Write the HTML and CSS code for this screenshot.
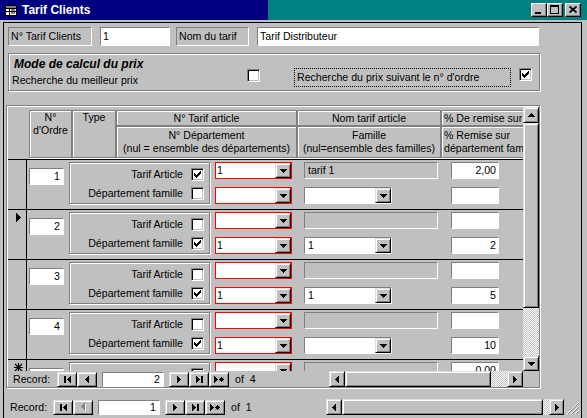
FILE: index.html
```html
<!DOCTYPE html>
<html>
<head>
<meta charset="utf-8">
<title>Tarif Clients</title>
<link rel="stylesheet" href="styles.css">
</head>
<body>
<div class="win">
  <div class="titlebar">
    <svg class="ticon" width="12" height="11" viewBox="0 0 12 11">
      <rect x="0.5" y="0.5" width="11" height="10" fill="#fff" stroke="#000"/>
      <rect x="1" y="1" width="10" height="2" fill="#808080"/>
      <path d="M1 3.5h10M1 6.5h10M4.5 3v7" stroke="#000" fill="none"/>
      <rect x="6" y="4" width="4" height="2" fill="#808080"/>
      <rect x="6" y="7" width="4" height="2" fill="#808080"/>
    </svg>
    <span class="ttext">Tarif Clients</span>
    <div class="tbtns">
      <span class="cap"><svg width="14" height="12" viewBox="0 0 14 12"><rect x="3" y="8" width="6" height="2"/></svg></span>
      <span class="cap"><svg width="14" height="12" viewBox="0 0 14 12"><path d="M2 1h9v9h-9z M3 3v6h7v-6z" fill-rule="evenodd"/></svg></span>
      <span class="cap close"><svg width="14" height="12" viewBox="0 0 14 12"><path d="M3.5 2.5l7 6M10.5 2.5l-7 6" stroke="#000" stroke-width="1.7" fill="none"/></svg></span>
    </div>
  </div>

  <div class="client">
    <div class="row1">
      <div class="lbl l1">N° Tarif Clients</div>
      <div class="tb t1">1</div>
      <div class="lbl l2">Nom du tarif</div>
      <div class="tb t2">Tarif Distributeur</div>
    </div>

    <div class="mode">
      <div class="mode-left">
        <div class="mode-title">Mode de calcul du prix</div>
        <div class="mode-sub">Recherche du meilleur prix</div>
      </div>
      <span class="cb m1"></span>
      <div class="dotlbl">Recherche du prix suivant le n° d'ordre</div>
      <span class="cb m2"><svg width="7" height="7" viewBox="0 0 7 7"><path d="M6 0h1v1h-1z M5 1h2v1h-2z M0 2h1v1h-1z M4 2h3v1h-3z M0 3h2v1h-2z M3 3h3v1h-3z M0 4h5v1h-5z M1 5h3v1h-3z M2 6h1v1h-1z"/></svg></span>
    </div>

    <div class="sub">
      <div class="sub-main">
        <div class="sub-body">
          <div class="hdr">
            <div class="hdr-sel"></div>
            <div class="hc c-ordre">N°<br>d'Ordre</div>
            <div class="hc c-type">Type</div>
            <div class="hgrp g-tarif">
              <div class="hc top">N° Tarif article</div>
              <div class="hc bot">N° Département<br>(nul = ensemble des départements)</div>
            </div>
            <div class="hgrp g-nom">
              <div class="hc top">Nom tarif article</div>
              <div class="hc bot">Famille<br>(nul=ensemble des familles)</div>
            </div>
            <div class="hgrp g-rem">
              <div class="hc top left">% De remise sur les articles</div>
              <div class="hc bot left">% Remise sur<br>département famille</div>
            </div>
          </div>

          <div class="rows">
            <div class="drow">
              <div class="sel"></div>
              <div class="ord">1</div>
              <div class="tframe">
                <div class="tl"><span class="tlab">Tarif Article</span><span class="cb"><svg width="7" height="7" viewBox="0 0 7 7"><path d="M6 0h1v1h-1z M5 1h2v1h-2z M0 2h1v1h-1z M4 2h3v1h-3z M0 3h2v1h-2z M3 3h3v1h-3z M0 4h5v1h-5z M1 5h3v1h-3z M2 6h1v1h-1z"/></svg></span></div>
                <div class="tl"><span class="tlab">Département famille</span><span class="cb"></span></div>
              </div>
              <div class="combos">
                <div class="rc"><span class="v">1</span><span class="dd"><svg width="7" height="4" viewBox="0 0 7 4"><path d="M0 0h7v1h-1v1h-1v1h-1v1h-1v-1h-1v-1h-1v-1h-1z"/></svg></span></div>
                <div class="rc"><span class="v"></span><span class="dd"><svg width="7" height="4" viewBox="0 0 7 4"><path d="M0 0h7v1h-1v1h-1v1h-1v1h-1v-1h-1v-1h-1v-1h-1z"/></svg></span></div>
              </div>
              <div class="fam">
                <div class="tbox">tarif 1</div>
                <div class="fc"><span class="v"></span><span class="dd"><svg width="7" height="4" viewBox="0 0 7 4"><path d="M0 0h7v1h-1v1h-1v1h-1v1h-1v-1h-1v-1h-1v-1h-1z"/></svg></span></div>
              </div>
              <div class="pct">
                <div class="pbox">2,00</div>
                <div class="pbox"></div>
              </div>
            </div>
            <div class="drow">
              <div class="sel"><svg width="5" height="9" viewBox="0 0 5 9"><path d="M0 0h1v1h1v1h1v1h1v1h1v1h-1v1h-1v1h-1v1h-1v1h-1z"/></svg></div>
              <div class="ord">2</div>
              <div class="tframe">
                <div class="tl"><span class="tlab">Tarif Article</span><span class="cb"></span></div>
                <div class="tl"><span class="tlab">Département famille</span><span class="cb"><svg width="7" height="7" viewBox="0 0 7 7"><path d="M6 0h1v1h-1z M5 1h2v1h-2z M0 2h1v1h-1z M4 2h3v1h-3z M0 3h2v1h-2z M3 3h3v1h-3z M0 4h5v1h-5z M1 5h3v1h-3z M2 6h1v1h-1z"/></svg></span></div>
              </div>
              <div class="combos">
                <div class="rc"><span class="v"></span><span class="dd"><svg width="7" height="4" viewBox="0 0 7 4"><path d="M0 0h7v1h-1v1h-1v1h-1v1h-1v-1h-1v-1h-1v-1h-1z"/></svg></span></div>
                <div class="rc"><span class="v">1</span><span class="dd"><svg width="7" height="4" viewBox="0 0 7 4"><path d="M0 0h7v1h-1v1h-1v1h-1v1h-1v-1h-1v-1h-1v-1h-1z"/></svg></span></div>
              </div>
              <div class="fam">
                <div class="tbox"></div>
                <div class="fc"><span class="v">1</span><span class="dd"><svg width="7" height="4" viewBox="0 0 7 4"><path d="M0 0h7v1h-1v1h-1v1h-1v1h-1v-1h-1v-1h-1v-1h-1z"/></svg></span></div>
              </div>
              <div class="pct">
                <div class="pbox"></div>
                <div class="pbox">2</div>
              </div>
            </div>
            <div class="drow">
              <div class="sel"></div>
              <div class="ord">3</div>
              <div class="tframe">
                <div class="tl"><span class="tlab">Tarif Article</span><span class="cb"></span></div>
                <div class="tl"><span class="tlab">Département famille</span><span class="cb"><svg width="7" height="7" viewBox="0 0 7 7"><path d="M6 0h1v1h-1z M5 1h2v1h-2z M0 2h1v1h-1z M4 2h3v1h-3z M0 3h2v1h-2z M3 3h3v1h-3z M0 4h5v1h-5z M1 5h3v1h-3z M2 6h1v1h-1z"/></svg></span></div>
              </div>
              <div class="combos">
                <div class="rc"><span class="v"></span><span class="dd"><svg width="7" height="4" viewBox="0 0 7 4"><path d="M0 0h7v1h-1v1h-1v1h-1v1h-1v-1h-1v-1h-1v-1h-1z"/></svg></span></div>
                <div class="rc"><span class="v">1</span><span class="dd"><svg width="7" height="4" viewBox="0 0 7 4"><path d="M0 0h7v1h-1v1h-1v1h-1v1h-1v-1h-1v-1h-1v-1h-1z"/></svg></span></div>
              </div>
              <div class="fam">
                <div class="tbox"></div>
                <div class="fc"><span class="v">1</span><span class="dd"><svg width="7" height="4" viewBox="0 0 7 4"><path d="M0 0h7v1h-1v1h-1v1h-1v1h-1v-1h-1v-1h-1v-1h-1z"/></svg></span></div>
              </div>
              <div class="pct">
                <div class="pbox"></div>
                <div class="pbox">5</div>
              </div>
            </div>
            <div class="drow">
              <div class="sel"></div>
              <div class="ord">4</div>
              <div class="tframe">
                <div class="tl"><span class="tlab">Tarif Article</span><span class="cb"></span></div>
                <div class="tl"><span class="tlab">Département famille</span><span class="cb"><svg width="7" height="7" viewBox="0 0 7 7"><path d="M6 0h1v1h-1z M5 1h2v1h-2z M0 2h1v1h-1z M4 2h3v1h-3z M0 3h2v1h-2z M3 3h3v1h-3z M0 4h5v1h-5z M1 5h3v1h-3z M2 6h1v1h-1z"/></svg></span></div>
              </div>
              <div class="combos">
                <div class="rc"><span class="v"></span><span class="dd"><svg width="7" height="4" viewBox="0 0 7 4"><path d="M0 0h7v1h-1v1h-1v1h-1v1h-1v-1h-1v-1h-1v-1h-1z"/></svg></span></div>
                <div class="rc"><span class="v">1</span><span class="dd"><svg width="7" height="4" viewBox="0 0 7 4"><path d="M0 0h7v1h-1v1h-1v1h-1v1h-1v-1h-1v-1h-1v-1h-1z"/></svg></span></div>
              </div>
              <div class="fam">
                <div class="tbox"></div>
                <div class="fc"><span class="v"></span><span class="dd"><svg width="7" height="4" viewBox="0 0 7 4"><path d="M0 0h7v1h-1v1h-1v1h-1v1h-1v-1h-1v-1h-1v-1h-1z"/></svg></span></div>
              </div>
              <div class="pct">
                <div class="pbox"></div>
                <div class="pbox">10</div>
              </div>
            </div>
            <div class="drow">
              <div class="sel"><svg class="ast" width="9" height="9" viewBox="0 0 9 9"><path d="M4.5 0v9M0 4.5h9M1 1l7 7M8 1l-7 7" stroke="#000" stroke-width="1.2" fill="none"/></svg></div>
              <div class="ord"></div>
              <div class="tframe">
                <div class="tl"><span class="cb"></span></div>
                <div class="tl"><span class="cb"></span></div>
              </div>
              <div class="combos">
                <div class="rc"><span class="v"></span><span class="dd"><svg width="7" height="4" viewBox="0 0 7 4"><path d="M0 0h7v1h-1v1h-1v1h-1v1h-1v-1h-1v-1h-1v-1h-1z"/></svg></span></div>
                <div class="rc"><span class="v"></span><span class="dd"></span></div>
              </div>
              <div class="fam">
                <div class="tbox"></div>
                <div class="fc"><span class="v"></span><span class="dd"></span></div>
              </div>
              <div class="pct">
                <div class="pbox">0,00</div>
                <div class="pbox"></div>
              </div>
            </div>
          </div>
        </div>

        <div class="vscroll">
          <span class="rb up"><svg width="7" height="4" viewBox="0 0 7 4"><path d="M3 0h1v1h1v1h1v1h1v1h-7v-1h1v-1h1v-1h1z"/></svg></span>
          <span class="rb vthumb"></span>
          <span class="dither vdither"></span>
          <span class="rb down"><svg width="7" height="4" viewBox="0 0 7 4"><path d="M0 0h7v1h-1v1h-1v1h-1v1h-1v-1h-1v-1h-1v-1h-1z"/></svg></span>
        </div>
      </div>

      <div class="sub-bottom">
        <div class="nav snav">
          <span class="navlbl">Record:</span>
          <span class="rb nb"><svg width="7" height="7" viewBox="0 0 7 7"><path d="M0 0h2v7h-2z M6 0h1v7h-1v-1h-1v-1h-1v-1h-1v-1h1v-1h1v-1h1z"/></svg></span>
          <span class="rb nb"><svg width="4" height="7" viewBox="0 0 4 7"><path d="M3 0h1v7h-1v-1h-1v-1h-1v-1h-1v-1h1v-1h1v-1h1z"/></svg></span>
          <span class="navtb">2</span>
          <span class="rb nb"><svg width="4" height="7" viewBox="0 0 4 7"><path d="M0 0h1v1h1v1h1v1h1v1h-1v1h-1v1h-1v1h-1z"/></svg></span>
          <span class="rb nb"><svg width="7" height="7" viewBox="0 0 7 7"><path d="M0 0h1v1h1v1h1v1h1v1h-1v1h-1v1h-1v1h-1z M5 0h2v7h-2z"/></svg></span>
          <span class="rb nb"><svg width="11" height="7" viewBox="0 0 11 7"><path d="M0 0h1v1h1v1h1v1h1v1h-1v1h-1v1h-1v1h-1z"/><path d="M7.5 1v5M5 3.5h5M5.7 1.7l3.6 3.6M9.3 1.7l-3.6 3.6" stroke="#000" stroke-width="1" fill="none"/></svg></span>
          <span class="navof">of&nbsp;&nbsp;4</span>
        </div>
        <div class="hscroll shs">
          <span class="rb hb"><svg width="4" height="7" viewBox="0 0 4 7"><path d="M3 0h1v7h-1v-1h-1v-1h-1v-1h-1v-1h1v-1h1v-1h1z"/></svg></span>
          <span class="rb hthumb"></span>
          <span class="dither hd"></span>
          <span class="rb hb"><svg width="4" height="7" viewBox="0 0 4 7"><path d="M0 0h1v1h1v1h1v1h1v1h-1v1h-1v1h-1v1h-1z"/></svg></span>
        </div>
        <div class="corner"></div>
      </div>
    </div>

    <div class="fnav">
      <div class="nav fn">
        <span class="navlbl">Record:</span>
        <span class="rb nb"><svg width="7" height="7" viewBox="0 0 7 7"><path d="M0 0h2v7h-2z M6 0h1v7h-1v-1h-1v-1h-1v-1h-1v-1h1v-1h1v-1h1z"/></svg></span>
        <span class="rb nb"><svg width="5" height="8" viewBox="0 0 5 8"><path d="M4 1h1v7h-1v-1h-1v-1h-1v-1h-1v-1h1v-1h1v-1h1z" fill="#fff"/><path d="M3 0h1v7h-1v-1h-1v-1h-1v-1h-1v-1h1v-1h1v-1h1z" fill="#808080"/></svg></span>
        <span class="navtb">1</span>
        <span class="rb nb"><svg width="4" height="7" viewBox="0 0 4 7"><path d="M0 0h1v1h1v1h1v1h1v1h-1v1h-1v1h-1v1h-1z"/></svg></span>
        <span class="rb nb"><svg width="7" height="7" viewBox="0 0 7 7"><path d="M0 0h1v1h1v1h1v1h1v1h-1v1h-1v1h-1v1h-1z M5 0h2v7h-2z"/></svg></span>
        <span class="rb nb"><svg width="11" height="7" viewBox="0 0 11 7"><path d="M0 0h1v1h1v1h1v1h1v1h-1v1h-1v1h-1v1h-1z"/><path d="M7.5 1v5M5 3.5h5M5.7 1.7l3.6 3.6M9.3 1.7l-3.6 3.6" stroke="#000" stroke-width="1" fill="none"/></svg></span>
        <span class="navof">of&nbsp;&nbsp;1</span>
      </div>
      <div class="hscroll fhs">
        <span class="rb hb"><svg width="4" height="7" viewBox="0 0 4 7"><path d="M3 0h1v7h-1v-1h-1v-1h-1v-1h-1v-1h1v-1h1v-1h1z"/></svg></span>
        <span class="rb hthumb"></span>
        <span class="dither hd"></span>
        <span class="rb hb"><svg width="4" height="7" viewBox="0 0 4 7"><path d="M0 0h1v1h1v1h1v1h1v1h-1v1h-1v1h-1v1h-1z"/></svg></span>
      </div>
      <span class="grip"><svg width="13" height="13" viewBox="0 0 13 13"><path d="M12 1L1 12M12 5L5 12M12 9L9 12" stroke="#808080" fill="none"/><path d="M12 0L0 12M12 4L4 12M12 8L8 12" stroke="#fff" fill="none"/></svg></span>
    </div>
  </div>
</div>
</body>
</html>
```

FILE: styles.css
```css
* { box-sizing: border-box; }
html, body { margin: 0; padding: 0; }
body {
  background: #c0c0c0;
  font-family: "Liberation Sans", Arial, sans-serif;
  font-size: 10.6px;
  color: #000;
}
svg { display: block; }

.win { width: 587px; height: 418px; overflow: hidden; background: #c0c0c0; }

/* title bar */
.titlebar {
  height: 20px;
  display: flex;
  align-items: center;
  background: linear-gradient(to right, #000080 0, #000080 268px, #008080 268px, #008080 100%);
}
.ticon { margin-left: 5px; flex: none; }
.ttext { margin-left: 5px; color: #fff; font-weight: bold; font-size: 12px; white-space: nowrap; }
.tbtns { margin-left: auto; margin-right: 6px; display: flex; }
.cap {
  width: 16px; height: 14px;
  background: #c0c0c0;
  border: 1px solid; border-color: #fff #000 #000 #fff;
  box-shadow: inset -1px -1px #808080;
  display: flex;
}
.cap.close { margin-left: 2px; }

/* client area */
.client {
  margin: 2px 0 0 3px;
  width: 579px; height: 396px;
  border: 1px solid #000; border-bottom: 0;
}

.rb {
  background: #c0c0c0;
  border: 1px solid; border-color: #dfdfdf #000 #000 #dfdfdf;
  box-shadow: inset 1px 1px #fff, inset -1px -1px #808080;
  display: flex; align-items: center; justify-content: center;
  flex: none;
}
.dither {
  background-color: #c0c0c0;
  background-image: repeating-conic-gradient(#fff 0 25%, #c0c0c0 0 50%);
  background-size: 2px 2px;
  flex: none;
}
.cb {
  width: 13px; height: 13px; flex: none;
  background: #fff;
  border: 1px solid; border-color: #808080 #fff #fff #808080;
  box-shadow: inset 1px 1px #000, inset -1px -1px #c0c0c0;
  display: flex; align-items: center; justify-content: center;
}

/* row 1 */
.row1 { display: flex; margin-top: 4px; height: 19px; }
.lbl, .tb {
  height: 19px; line-height: 17px; padding-left: 2px; white-space: nowrap;
  border: 1px solid; border-color: #808080 #fff #fff #808080;
}
.tb { background: #fff; }
.l1 { margin-left: 4px; width: 84px; }
.t1 { margin-left: 8px; width: 70px; }
.l2 { margin-left: 6px; width: 73px; }
.t2 { margin-left: 8px; width: 282px; }

/* mode frame */
.mode {
  margin: 7px 0 0 4px;
  width: 532px; height: 38px;
  border: 1px solid #808080;
  box-shadow: inset 1px 1px #fff, 1px 1px #fff;
  display: flex; align-items: flex-start;
}
.mode-left { width: 238px; margin-top: 3px; flex: none; }
.mode-title { font-weight: bold; font-style: italic; font-size: 12px; line-height: 14px; margin-left: 5px; white-space: nowrap; }
.mode-sub { margin-left: 3px; margin-top: 3px; line-height: 13px; white-space: nowrap; }
.cb.m1 { margin-top: 15px; }
.dotlbl {
  margin: 14px 0 0 34px; width: 217px; height: 19px;
  border: 1px dotted #000; padding-left: 2px; line-height: 17px; white-space: nowrap; flex: none;
}
.cb.m2 { margin: 14px 0 0 8px; }

/* subform */
.sub {
  margin: 14px 0 0 2px;
  width: 534px; height: 283px;
  border: 1px solid #808080;
  box-shadow: inset 1px 1px #fff, 1px 1px #fff;
  padding: 1px 0 0 1px;
  display: flex; flex-direction: column;
}
.sub-main { display: flex; height: 264px; flex: none; }
.sub-body { width: 515px; height: 264px; overflow: hidden; display: flex; flex-direction: column; flex: none; }

.hdr { display: flex; height: 52px; padding-top: 3px; flex: none; }
.hdr-sel { width: 21px; flex: none; }
.hc {
  border: 1px solid #808080;
  box-shadow: inset 1px 1px #fff, 1px 1px #fff;
  text-align: center; line-height: 13px; white-space: nowrap; overflow: hidden;
  flex: none;
}
.c-ordre { width: 43px; height: 48px; }
.c-type { width: 44px; height: 48px; }
.hgrp { display: flex; flex-direction: column; flex: none; }
.hgrp .top { height: 16px; line-height: 13px; padding-top: 1px; }
.hgrp .bot { height: 32px; padding-top: 2px; }
.g-tarif { width: 181px; }
.g-nom { width: 144px; }
.g-rem { width: 120px; }
.hc.left { text-align: left; padding-left: 2px; }

.rows { flex: 1; overflow: hidden; }
.drow { height: 50px; border-top: 1px solid #000; display: flex; align-items: flex-start; }
.sel { width: 19px; height: 49px; border-right: 1px solid #000; flex: none; padding: 3px 0 0 8px; }
.sel .ast { margin-left: -2px; }
.ord {
  margin: 8px 0 0 2px; width: 35px; height: 17px; flex: none;
  background: #fff; border: 1px solid; border-color: #808080 #fff #fff #808080;
  text-align: right; padding-right: 3px; line-height: 15px;
}
.tframe {
  margin: 2px 0 0 5px; width: 141px; height: 42px; flex: none;
  border: 1px solid #808080;
  box-shadow: inset 1px 1px #fff, 1px 1px #fff;
  padding: 5px 5px 0 0;
  display: flex; flex-direction: column; gap: 6px;
}
.tl { display: flex; justify-content: flex-end; align-items: center; height: 13px; }
.tlab { margin-right: 8px; white-space: nowrap; line-height: 13px; }

.combos, .fam, .pct { display: flex; flex-direction: column; gap: 8px; flex: none; margin-top: 2px; }
.combos { margin-left: 5px; width: 77px; }
.fam { margin-left: 12px; width: 134px; }
.pct { margin-left: 13px; width: 48px; }

.rc {
  height: 17px; width: 77px; background: #fff; border: 1px solid #ff0000;
  display: flex;
}
.v { flex: 1; padding-left: 1px; line-height: 15px; white-space: nowrap; }
.dd { width: 16px; height: 15px; }
.rc .dd, .fc .dd {
  background: #c0c0c0;
  border: 1px solid; border-color: #dfdfdf #000 #000 #dfdfdf;
  box-shadow: inset 1px 1px #fff, inset -1px -1px #808080;
  display: flex; align-items: center; justify-content: center; flex: none;
}
.tbox {
  height: 17px; width: 134px; background: #c0c0c0;
  border: 1px solid; border-color: #808080 #fff #fff #808080;
  padding-left: 3px; line-height: 15px;
}
.fc {
  height: 17px; width: 88px; background: #fff;
  border: 1px solid; border-color: #808080 #fff #fff #808080;
  display: flex;
}
.fc .v { padding-left: 3px; }
.pbox {
  height: 17px; width: 48px; background: #fff;
  border: 1px solid; border-color: #808080 #fff #fff #808080;
  text-align: right; padding-right: 2px; line-height: 15px;
}

/* vertical scrollbar */
.vscroll { width: 16px; height: 264px; display: flex; flex-direction: column; flex: none; }
.vscroll .up { height: 16px; }
.vscroll .vthumb { height: 185px; }
.vscroll .vdither { height: 48px; }
.vscroll .down { height: 15px; }

/* sub bottom bar */
.sub-bottom { display: flex; height: 16px; flex: none; }
.nav { display: flex; align-items: center; flex: none; }
.navlbl { white-space: nowrap; flex: none; }
.nb { width: 20px; height: 15px; }
.navtb {
  width: 62px; height: 15px; margin: 0 5px; flex: none;
  background: #fff; border: 1px solid; border-color: #808080 #fff #fff #808080;
  text-align: right; padding-right: 3px; line-height: 13px;
}
.navof { margin-left: 6px; white-space: nowrap; }
.snav { width: 321px; }
.snav .navlbl { width: 49px; padding-left: 5px; }

.hscroll { display: flex; height: 16px; flex: none; }
.hb { width: 16px; height: 16px; }
.shs .hthumb { width: 146px; height: 16px; }
.shs .hd { width: 16px; height: 16px; }
.corner { width: 16px; height: 16px; }

/* form nav */
.fnav { display: flex; margin-top: 11px; height: 16px; align-items: center; }
.fn { width: 322px; }
.fn .navlbl { width: 49px; padding-left: 6px; }
.fhs { width: 238px; }
.fhs .hthumb { width: 201px; height: 16px; }
.fhs .hd { width: 6px; height: 16px; }
.fhs .hb:last-child { width: 15px; }
.grip { margin-left: 3px; width: 14px; height: 16px; display: flex; align-items: flex-end; }
```
